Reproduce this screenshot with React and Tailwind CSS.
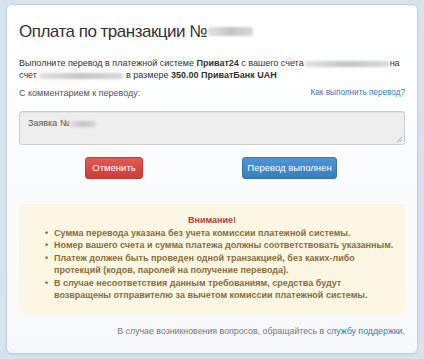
const blur = "inline-block align-middle rounded-[2px] bg-gradient-to-r from-[#e2e2e2] via-[#c4c4c4] to-[#dadada] blur-[0.8px]";

const notes = [
  "Сумма перевода указана без учета комиссии платежной системы.",
  "Номер вашего счета и сумма платежа должны соответствовать указанным.",
  "Платеж должен быть проведен одной транзакцией, без каких-либо протекций (кодов, паролей на получение перевода).",
  "В случае несоответствия данным требованиям, средства будут возвращены отправителю за вычетом комиссии платежной системы.",
];

export default function App() {
  return (
    <div className="min-h-[359px] bg-[#d7e4ef] px-[6px] pt-[4px] pb-[6px] font-['Liberation_Sans',Arial,sans-serif]">
      <div className="rounded-[6px] border border-[#c3d0db] bg-gradient-to-b from-white to-[#f6f8fa] px-[12px] pt-[15px] pb-[16px] shadow-[0_1px_2px_rgba(0,0,0,0.08)]">
        <h1 className="text-[17px] leading-[24px] tracking-[-0.5px] text-[#333]">
          Оплата по транзакции №
          <span className={`${blur} ml-[1px] w-[45px] h-[9px] -mt-[3px]`} />
        </h1>

        <p className="mt-[13px] text-[9px] leading-[12px] text-[#333]">
          <span>Выполните перевод в платежной системе </span>
          <b>Приват24</b>
          <span> с вашего счета</span>
          <span className={`${blur} w-[84px] h-[6px] mx-[1px]`} />
          <span>на счет </span>
          <span className={`${blur} w-[84px] h-[6px]`} />
          <span> в размере </span>
          <b>350.00 ПриватБанк UAH</b>
        </p>

        <div className="mt-[6px] flex items-center justify-between text-[9px] leading-[12px]">
          <span className="text-[#555]">С комментарием к переводу:</span>
          <a className="text-[8.2px] text-[#3a79b5]">Как выполнить перевод?</a>
        </div>

        <div className="relative mt-[12px] h-[34px] rounded-[3px] border border-[#cfcfcf] bg-[#eeeeee] px-[8px] pt-[5px] text-[9px] leading-[12px] text-[#555] shadow-[inset_0_1px_1px_rgba(0,0,0,0.06)]">
          Заявка №<span className={`${blur} w-[26px] h-[6px] ml-[1px]`} />
          <svg className="absolute right-[1px] bottom-[1px]" width="7" height="7" viewBox="0 0 7 7">
            <path d="M6 1L1 6M6 3.5L3.5 6" stroke="#999" strokeWidth="0.8" />
          </svg>
        </div>

        <div className="mt-[12px] flex pl-[66px]">
          <button className="h-[22px] w-[58px] whitespace-nowrap rounded-[3px] border border-[#c23a36] bg-gradient-to-b from-[#e05a56] to-[#cc3b37] text-[9.5px] text-white">
            Отменить
          </button>
          <button className="ml-[99px] h-[22px] w-[95px] whitespace-nowrap rounded-[3px] border border-[#3575b0] bg-gradient-to-b from-[#4f96d6] to-[#3a7dbd] text-[9.5px] text-white">
            Перевод выполнен
          </button>
        </div>

        <div className="mt-[25px] rounded-[4px] bg-[#fcf7e3] pt-[10px] pb-[11px] text-[9px] font-bold leading-[12.5px] text-[#8a6d3b]">
          <div className="text-center text-[#a94442]">Внимание!</div>
          <ul className="pl-[35px] pr-[9px]">
            {notes.map((n) => (
              <li key={n} className="relative">
                <span className="absolute -left-[9px] top-0">•</span>
                {n}
              </li>
            ))}
          </ul>
        </div>

        <p className="mt-[12px] text-right text-[8.8px] leading-[12px] text-[#777]">
          В случае возникновения вопросов, обращайтесь в <a className="text-[#3a79b5]">службу поддержки</a>.
        </p>
      </div>
    </div>
  );
}
